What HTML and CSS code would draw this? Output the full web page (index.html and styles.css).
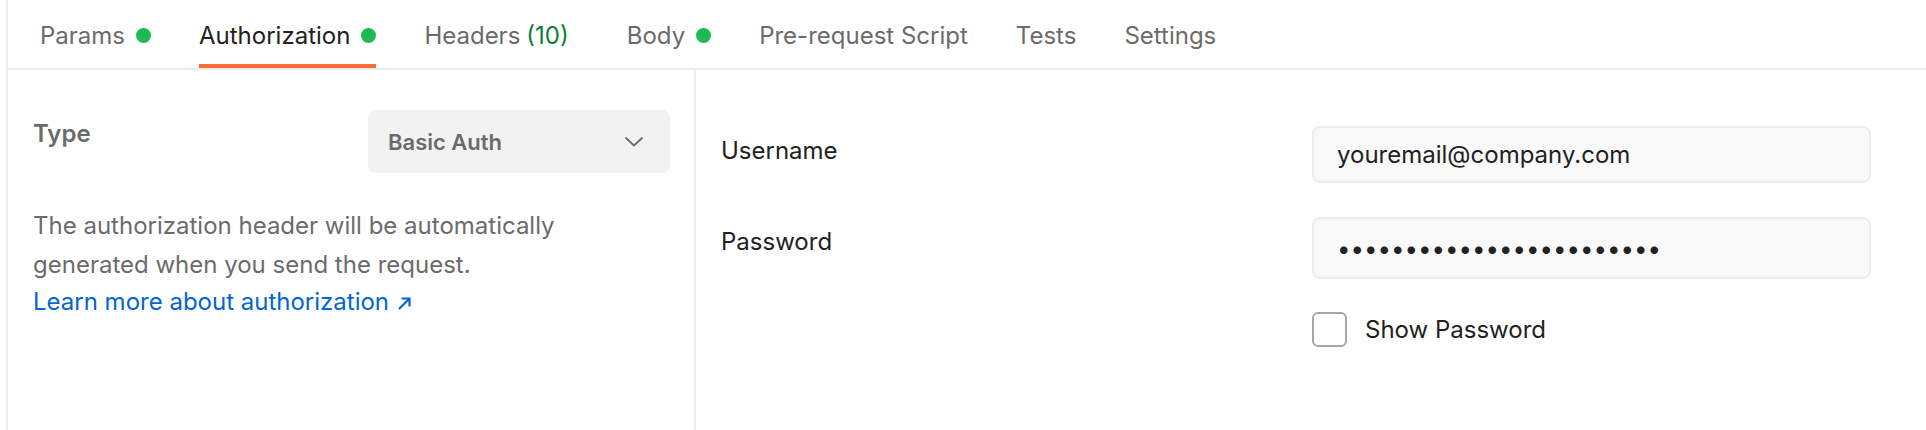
FILE: index.html
```html
<!DOCTYPE html>
<html lang="en">
<head>
<meta charset="utf-8">
<title>Authorization</title>
<link rel="stylesheet" href="styles.css">
</head>
<body>
<div class="pane">
  <nav class="tabs">
    <div class="tab">Params<span class="dot"></span></div>
    <div class="tab active">Authorization<span class="dot"></span></div>
    <div class="tab tab-headers">Headers<span class="count">(10)</span></div>
    <div class="tab">Body<span class="dot"></span></div>
    <div class="tab">Pre-request Script</div>
    <div class="tab">Tests</div>
    <div class="tab">Settings</div>
  </nav>
  <div class="content">
    <section class="auth-type">
      <div class="type-row">
        <div class="type-label">Type</div>
        <div class="dropdown">
          <span class="dropdown-text">Basic Auth</span>
          <svg class="chevron" width="18" height="10" viewBox="0 0 18 10"><path d="M1 1 L9 8.5 L17 1" fill="none" stroke="#6b6b6b" stroke-width="1.8" stroke-linecap="round" stroke-linejoin="round"/></svg>
        </div>
      </div>
      <p class="desc">The authorization header will be automatically generated when you send the request.</p>
      <a class="learn" href="#">Learn more about authorization<svg class="arrow" width="15" height="15" viewBox="0 0 15 15"><path d="M2 13 L12.5 2.5 M4.5 2.5 H12.5 V10.5" fill="none" stroke="#0265d2" stroke-width="2.2"/></svg></a>
    </section>
    <section class="auth-form">
      <div class="field-label">Username</div>
      <input class="field" type="text" value="youremail@company.com">
      <div class="field-label">Password</div>
      <input class="field field-pass" type="password" value="abcdefghijklmnopqrstuvwx">
      <div></div>
      <label class="check"><input class="check-box" type="checkbox">Show Password</label>
    </section>
  </div>
</div>
</body>
</html>
```

FILE: styles.css
```css
* { box-sizing: border-box; }
html, body { margin: 0; padding: 0; background: #ffffff; }
body {
  font-family: Inter, "Noto Sans", "Liberation Sans", sans-serif;
  font-size: 24px;
  color: #212121;
}
.pane {
  margin-left: 6px;
  border-left: 2px solid #ededed;
  min-height: 430px;
  display: flex;
  flex-direction: column;
}
.tabs {
  display: flex;
  gap: 48px;
  padding-left: 32px;
  border-bottom: 2px solid #ebebeb;
}
.tab {
  display: flex;
  align-items: center;
  height: 68px;
  padding-top: 7px;
  border-bottom: 4px solid transparent;
  color: #6b6b6b;
  line-height: normal;
  white-space: nowrap;
}
.tab.active {
  color: #212121;
  border-bottom-color: #ff6c37;
}
.tab-headers { margin-right: 10px; }
.dot {
  width: 15px;
  height: 15px;
  border-radius: 50%;
  background: #1fb857;
  margin-left: 11px;
}
.count {
  color: #0a7f34;
  margin-left: 6px;
}
.content {
  flex: 1;
  display: flex;
}
.auth-type {
  width: 688px;
  border-right: 2px solid #ededed;
  padding: 40px 24px 0 25px;
}
.type-row {
  display: flex;
  justify-content: space-between;
  align-items: flex-start;
}
.type-label {
  font-weight: 600;
  color: #6b6b6b;
  padding-top: 9px;
}
.dropdown {
  width: 302px;
  height: 63px;
  background: #f2f2f2;
  border-radius: 8px;
  display: flex;
  align-items: center;
  justify-content: space-between;
  padding: 0 27px 0 20px;
}
.dropdown-text {
  font-size: 22px;
  font-weight: 600;
  color: #6b6b6b;
}
.chevron { display: block; }
.desc {
  margin: 33px 0 0;
  line-height: 39px;
  color: #6b6b6b;
}
.learn {
  display: block;
  line-height: 35px;
  color: #0265d2;
  text-decoration: none;
}
.arrow {
  margin-left: 8px;
  vertical-align: -1px;
}
.auth-form {
  flex: 1;
  display: grid;
  grid-template-columns: minmax(0, 1fr) 559px;
  grid-auto-rows: min-content;
  row-gap: 34px;
  padding: 56px 55px 0 25px;
  align-content: start;
}
.field-label {
  padding-top: 10px;
  line-height: normal;
  color: #212121;
}
.field {
  display: block;
  width: 100%;
  height: 57px;
  margin: 0;
  padding: 0 23px;
  border: 2px solid #ededed;
  border-radius: 8px;
  background: #f9f9f9;
  font-family: Inter, "Noto Sans", sans-serif;
  font-size: 24px;
  color: #212121;
  outline: none;
}
.field-pass {
  height: 62px;
  letter-spacing: 0;
}
.check {
  display: flex;
  align-items: center;
  gap: 18px;
  margin-top: -1px;
  color: #212121;
}
.check-box {
  appearance: none;
  -webkit-appearance: none;
  width: 35px;
  height: 35px;
  margin: 0;
  border: 2px solid #a6a6a6;
  border-radius: 6px;
  background: #ffffff;
}
```
